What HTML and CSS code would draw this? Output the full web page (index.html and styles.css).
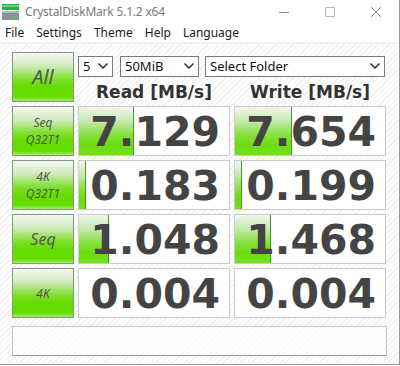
FILE: index.html
```html
<!DOCTYPE html>
<html lang="en">
<head>
  <meta charset="UTF-8">
  <meta name="viewport" content="width=device-width, initial-scale=1.0">
  <title>CrystalDiskMark 5.1.2 x64</title>
  <link rel="stylesheet" href="styles.css">
</head>
<body>
  <div class="window">
    <div class="titlebar">
      <svg class="app-icon" width="18" height="17" viewBox="0 0 18 17">
        <rect x="0" y="0" width="17" height="6" fill="#22b14c"/>
        <rect x="0" y="1" width="17" height="2" fill="#5fd67f"/>
        <rect x="0" y="7" width="17" height="9" fill="#8c9198"/>
        <rect x="0" y="7" width="17" height="2" fill="#b4b8bd"/>
        <rect x="12" y="11" width="3" height="3" fill="#3fd060"/>
      </svg>
      <span class="title">CrystalDiskMark 5.1.2 x64</span>
      <div class="controls">
        <div class="ctrl">
          <svg width="10" height="10" viewBox="0 0 10 10"><path d="M0 5.5H10" stroke="#888" stroke-width="1"/></svg>
        </div>
        <div class="ctrl">
          <svg width="10" height="10" viewBox="0 0 10 10"><rect x="0.5" y="0.5" width="9" height="9" fill="none" stroke="#bbb" stroke-width="1"/></svg>
        </div>
        <div class="ctrl">
          <svg width="10" height="10" viewBox="0 0 10 10"><path d="M0 0L10 10M10 0L0 10" stroke="#888" stroke-width="1"/></svg>
        </div>
      </div>
    </div>

    <div class="menubar">
      <span>File</span>
      <span>Settings</span>
      <span>Theme</span>
      <span>Help</span>
      <span>Language</span>
    </div>

    <div class="content">
      <div class="grid">
        <div class="label-btn all">All</div>
        <div class="top-cell">
          <div class="selects">
            <div class="dropdown sel-count">5<svg width="10" height="6" viewBox="0 0 10 6"><path d="M0.5 0.5L5 5L9.5 0.5" fill="none" stroke="#222" stroke-width="1.4"/></svg></div>
            <div class="dropdown sel-size">50MiB<svg width="10" height="6" viewBox="0 0 10 6"><path d="M0.5 0.5L5 5L9.5 0.5" fill="none" stroke="#222" stroke-width="1.4"/></svg></div>
            <div class="dropdown sel-folder">Select Folder<svg width="10" height="6" viewBox="0 0 10 6"><path d="M0.5 0.5L5 5L9.5 0.5" fill="none" stroke="#222" stroke-width="1.4"/></svg></div>
          </div>
          <div class="headers">
            <div class="head">Read [MB/s]</div>
            <div class="head">Write [MB/s]</div>
          </div>
        </div>

        <div class="label-btn">Seq<br>Q32T1</div>
        <div class="result"><div class="bar" style="width: 55px"></div><span>7.129</span></div>
        <div class="result"><div class="bar" style="width: 57px"></div><span>7.654</span></div>

        <div class="label-btn">4K<br>Q32T1</div>
        <div class="result"><div class="bar" style="width: 7px"></div><span>0.183</span></div>
        <div class="result"><div class="bar" style="width: 7px"></div><span>0.199</span></div>

        <div class="label-btn big">Seq</div>
        <div class="result"><div class="bar" style="width: 30px"></div><span>1.048</span></div>
        <div class="result"><div class="bar" style="width: 36px"></div><span>1.468</span></div>

        <div class="label-btn">4K</div>
        <div class="result"><span>0.004</span></div>
        <div class="result"><span>0.004</span></div>
      </div>

      <div class="comment"></div>
    </div>
  </div>
</body>
</html>
```

FILE: styles.css
```css
* {
  margin: 0;
  padding: 0;
  box-sizing: border-box;
}

body {
  background-color: #fff;
  font-family: "Noto Sans", sans-serif;
}

.window {
  width: 400px;
  height: 365px;
  border-right: 1px solid #9a9a9a;
  border-bottom: 1px solid #9a9a9a;
  background-color: #fff;
  display: flex;
  flex-direction: column;
}

.titlebar {
  height: 23px;
  display: flex;
  align-items: center;
  padding-left: 2px;
}

.app-icon {
  margin-top: 1px;
}

.title {
  margin-left: 5px;
  font-size: 12px;
  color: #7a7a7a;
  letter-spacing: -0.2px;
}

.controls {
  margin-left: auto;
  display: flex;
  height: 100%;
}

.ctrl {
  width: 46px;
  display: flex;
  align-items: center;
  justify-content: center;
}

.menubar {
  height: 21px;
  display: flex;
  align-items: center;
  gap: 12px;
  padding-left: 5px;
  font-size: 12px;
  color: #1a1a1a;
  border-bottom: 2px solid #f0f0f0;
}

.content {
  flex: 1;
  padding: 8px 12px 0 12px;
  background-color: #fdfdfd;
  background-image: repeating-linear-gradient(135deg, #fdfdfd 0 3px, #efefef 3px 4px);
}

.grid {
  display: grid;
  grid-template-columns: 62px 152px 152px;
  grid-auto-rows: 50px;
  gap: 4px;
}

.label-btn {
  display: flex;
  align-items: center;
  justify-content: center;
  text-align: center;
  border: 1px solid #7f9c7d;
  background: linear-gradient(to bottom, #f6f8f4 0%, #cdeab8 28%, #7ee02a 55%, #66dd00 70%, #66dd00 92%, #a6ef6a 100%);
  color: #555;
  font-size: 12px;
  line-height: 17px;
  font-style: italic;
}

.label-btn.all {
  font-size: 20px;
  line-height: 24px;
}

.label-btn.big {
  font-size: 16px;
  line-height: 20px;
}

.top-cell {
  grid-column: span 2;
  padding-top: 4px;
}

.selects {
  display: flex;
  gap: 6px;
}

.dropdown {
  height: 21px;
  border: 1px solid #7a7a7a;
  background-color: #fff;
  display: flex;
  align-items: center;
  justify-content: space-between;
  padding: 0 4px 1px 4px;
  font-size: 13px;
  color: #111;
}

.sel-count {
  width: 35px;
  margin-right: 1px;
}

.sel-size {
  width: 79px;
}

.sel-folder {
  width: 180px;
}

.headers {
  display: grid;
  grid-template-columns: 152px 152px;
  gap: 4px;
  margin-top: 5px;
}

.head {
  text-align: center;
  font-family: "DejaVu Sans", sans-serif;
  font-weight: bold;
  font-size: 17px;
  line-height: 20px;
  color: #333;
}

.result {
  position: relative;
  border: 1px solid #cacaca;
  background-color: #fff;
  text-align: right;
  padding: 2px 9px 0 0;
  font-family: "DejaVu Sans", sans-serif;
  font-weight: bold;
  font-size: 41px;
  line-height: 46px;
  color: #444;
  overflow: hidden;
}

.result span {
  position: relative;
}

.bar {
  position: absolute;
  left: 0;
  top: 0;
  bottom: 0;
  border-right: 1px solid #3e9a22;
  background: linear-gradient(to bottom, #f2f6ef 0%, #c6e8ae 30%, #86e03a 58%, #6cdc10 80%, #74e020 100%);
}

.comment {
  margin-top: 8px;
  height: 30px;
  border: 1px solid #c6c6c6;
  border-bottom-color: #9c9c9c;
  background-color: rgba(255, 255, 255, 0.55);
}
```
